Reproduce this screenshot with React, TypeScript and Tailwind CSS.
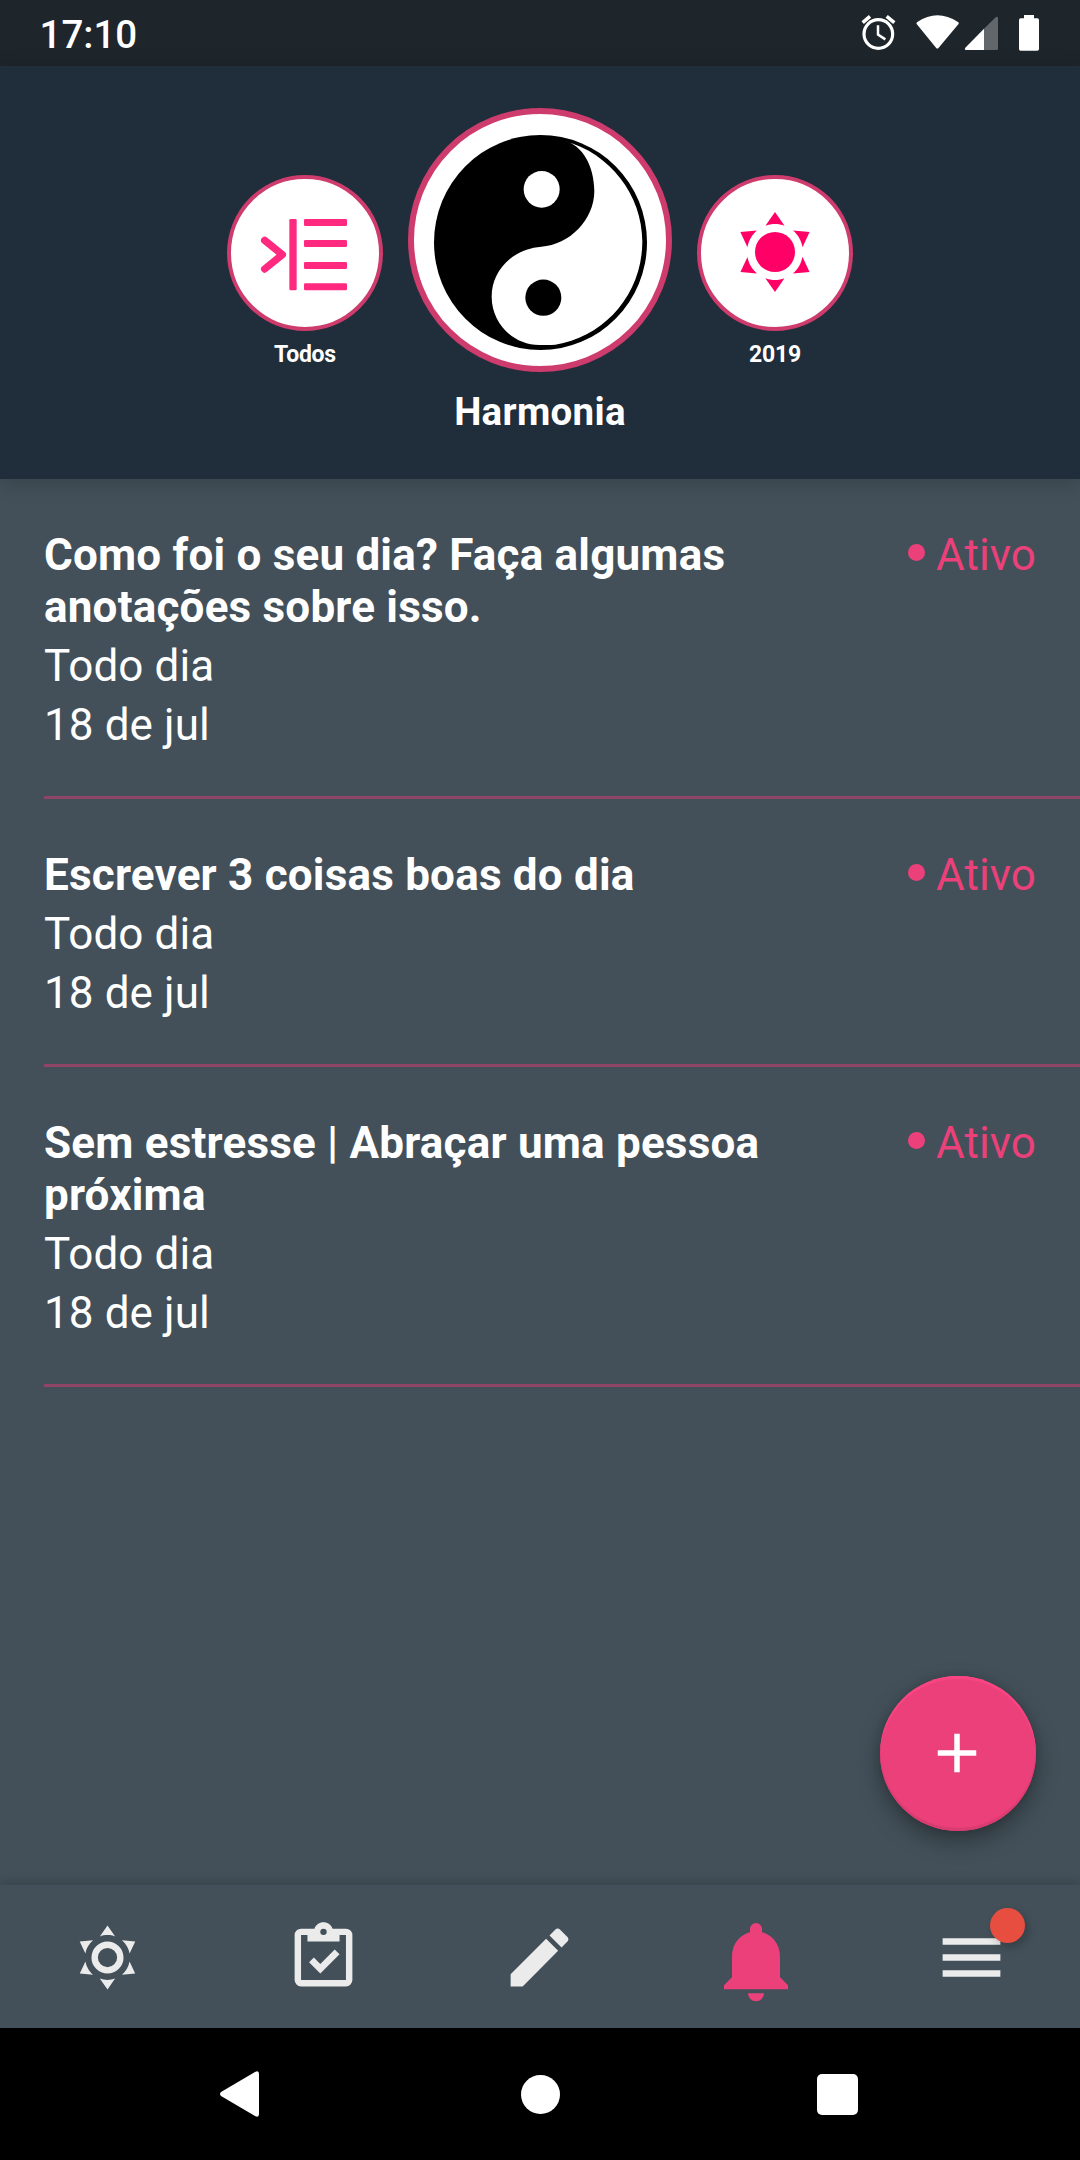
import React from 'react'

type Reminder = {
    id: number;
    title: string;
    repeat: string;
    date: string;
};

interface IconProps {
    d: string;
    className?: string;
}

const reminders: Reminder[] = [
    { id: 1, title: 'Como foi o seu dia? Faça algumas anotações sobre isso.', repeat: 'Todo dia', date: '18 de jul' },
    { id: 2, title: 'Escrever 3 coisas boas do dia', repeat: 'Todo dia', date: '18 de jul' },
    { id: 3, title: 'Sem estresse | Abraçar uma pessoa próxima', repeat: 'Todo dia', date: '18 de jul' },
];

const sunRays = 'M12,2L14.39,5.42C13.65,5.15 12.84,5 12,5C11.16,5 10.35,5.15 9.61,5.42L12,2M3.34,7L7.5,6.65C6.9,7.16 6.36,7.78 5.94,8.5C5.5,9.24 5.25,10 5.11,10.79L3.34,7M3.36,17L5.12,13.23C5.26,14 5.53,14.78 5.95,15.5C6.37,16.24 6.91,16.86 7.5,17.37L3.36,17M20.65,7L18.88,10.79C18.74,10 18.47,9.23 18.05,8.5C17.63,7.78 17.1,7.15 16.5,6.64L20.65,7M20.64,17L16.5,17.36C17.09,16.85 17.62,16.22 18.04,15.5C18.46,14.77 18.73,14 18.87,13.21L20.64,17M12,22L9.59,18.56C10.33,18.83 11.14,19 12,19C12.82,19 13.63,18.83 14.37,18.56L12,22Z';
const sunRing = 'M12,7A5,5 0 0,1 17,12A5,5 0 0,1 12,17A5,5 0 0,1 7,12A5,5 0 0,1 12,7M12,9A3,3 0 0,0 9,12A3,3 0 0,0 12,15A3,3 0 0,0 15,12A3,3 0 0,0 12,9';
const clipboard = 'M19,3H14.82C14.4,1.84 13.3,1 12,1C10.7,1 9.6,1.84 9.18,3H5A2,2 0 0,0 3,5V19A2,2 0 0,0 5,21H19A2,2 0 0,0 21,19V5A2,2 0 0,0 19,3M12,3A1,1 0 0,1 13,4A1,1 0 0,1 12,5A1,1 0 0,1 11,4A1,1 0 0,1 12,3M7,7H17V5H19V19H5V5H7V7M7.5,13.5L9,12L11,14L15.5,9.5L17,11L11,17L7.5,13.5Z';
const pencil = 'M20.71,7.04C21.1,6.65 21.1,6 20.71,5.63L18.37,3.29C18,2.9 17.35,2.9 16.96,3.29L15.12,5.12L18.87,8.87M3,17.25V21H6.75L17.81,9.93L14.06,6.18L3,17.25Z';
const menu = 'M3,6H21V8H3V6M3,11H21V13H3V11M3,16H21V18H3V16Z';
const plus = 'M19,13H13V19H11V13H5V11H11V5H13V11H19V13Z';

const Icon: React.FC<IconProps> = ({ d, className }) => (
    <svg viewBox="0 0 24 24" fill="currentColor" className={className}>
        <path d={d} />
    </svg>
);

const StatusBar = () => (
    <div className="flex h-[66px] items-start justify-between bg-[#1e252b] pl-[39.5px] pr-10">
        <span className="mt-[11px] text-[38.5px] font-medium leading-[48px]">17:10</span>
        <div className="mt-[13px] flex">
            <svg viewBox="93 39 105 117" className="h-[39px] w-[35px]" fill="none" stroke="#fff">
                <circle cx="145" cy="102" r="43" strokeWidth="9.5" />
                <path d="M144 76V104L166 118" strokeWidth="7.5" />
                <path d="M98 68L120 49M170 49L193 68" strokeWidth="10.5" />
            </svg>
            <svg viewBox="258 39 132 117" className="ml-5 h-[39px] w-11" fill="#fff">
                <path d="M260 72Q258 69 262 66Q322 26 384 66Q388 69 385 73L326 143Q322 148 318 143Z" />
            </svg>
            <svg viewBox="402 39 105 117" className="ml-1 h-[39px] w-[35px]">
                <path d="M462 86L497 52Q504 48 504 55V146Q504 150 500 150H462Z" fill="#62676b" />
                <path d="M462 86V150H408Q402 149 406 143Z" fill="#fff" />
            </svg>
            <svg viewBox="564 39 66 117" className="ml-[19px] h-[39px] w-[22px]" fill="#fff">
                <path d="M582 45H612V55H622Q627 55 627 60V147Q627 152 622 152H572Q567 152 567 147V60Q567 55 572 55H582Z" />
            </svg>
        </div>
    </div>
);

const Header = () => (
    <header className="relative z-10 flex h-[413px] justify-center gap-[25px] bg-[#202d3a] pt-[42px] shadow-[0_4px_20px_rgba(0,0,0,0.18)]">
        <div className="mt-[67px] flex w-[156px] flex-col items-center">
            <div className="size-[156px] rounded-full border-4 border-[#cd3c6d] bg-white">
                <svg viewBox="63 57 444 444" className="size-[148px]" fill="#ff2a7f">
                    <path d="M164 241L217 284L164 327" fill="none" stroke="#ff2a7f" strokeWidth="22" strokeLinecap="round" strokeLinejoin="round" />
                    <rect x="238" y="177" width="22" height="214" rx="4" />
                    <rect x="282" y="177" width="129" height="21" rx="4" />
                    <rect x="282" y="240" width="129" height="21" rx="4" />
                    <rect x="282" y="306" width="129" height="21" rx="4" />
                    <rect x="282" y="370" width="129" height="21" rx="4" />
                </svg>
            </div>
            <span className="mt-[10px] text-[23px] font-bold leading-[28px] tracking-[-0.25px]">Todos</span>
        </div>
        <div className="flex w-[264px] flex-col items-center">
            <div className="size-[264px] rounded-full border-[6px] border-[#cd3c6d] bg-white">
                <svg viewBox="42 42 756 756" className="size-[252px]">
                    <ellipse cx="421.5" cy="427.5" rx="319.5" ry="322.5" />
                    <path
                        d="M494 123C548 136 582 198 583 272C583 360 508 434 424 440C340 446 275 510 275 590C275 672 342 735 418 735C430 735 450 736 466 734C610 712 727 585 727 424C727 285 630 160 494 123Z"
                        fill="#fff"
                    />
                    <ellipse cx="425" cy="268" rx="54" ry="55" fill="#fff" />
                    <ellipse cx="430" cy="593" rx="54" ry="54.5" />
                </svg>
            </div>
            <span className="mt-[17px] text-[38.5px] font-bold leading-[46px] tracking-[0.3px]">Harmonia</span>
        </div>
        <div className="mt-[67px] flex w-[156px] flex-col items-center">
            <div className="flex size-[156px] items-center justify-center rounded-full border-4 border-[#cd3c6d] bg-white">
                <svg viewBox="0 0 24 24" className="mb-[2px] size-24" fill="#ff0066">
                    <circle cx="12" cy="12" r="5" />
                    <path d={sunRays} />
                </svg>
            </div>
            <span className="mt-[10px] text-[23px] font-bold leading-[28px] tracking-[-0.25px]">2019</span>
        </div>
    </header>
);

const ReminderRow: React.FC<{ reminder: Reminder }> = ({ reminder }) => (
    <li className="ml-11 border-b-3 border-[#8e4566] pb-[45px] pt-[50px]">
        <div className="flex items-start justify-between pr-11 text-[44px] leading-[52px]">
            <div>
                <h2 className="w-[760px] font-bold tracking-[0.2px]">{reminder.title}</h2>
                <p className="mt-[7px] tracking-[0.1px]">{reminder.repeat}</p>
                <p className="mt-[7px] tracking-[0.1px]">{reminder.date}</p>
            </div>
            <div className="flex text-[#ec407a]">
                <span className="mr-[11px] mt-[15px] size-[17px] rounded-full bg-[#ec407a]" />
                <span className="tracking-[0.1px]">Ativo</span>
            </div>
        </div>
    </li>
);

const TabBar = () => (
    <nav className="relative grid h-[143px] grid-cols-5 items-center justify-items-center bg-[#435059] pt-px text-[#ebebeb] shadow-[0_-1px_12px_rgba(0,0,0,0.22)]">
        <Icon d={sunRing + sunRays} className="mr-px size-[77px]" />
        <Icon d={clipboard} className="mr-px size-[77px]" />
        <Icon d={pencil} className="mr-px size-[77px]" />
        <svg viewBox="732 158 192 237" className="mt-[10px] h-[79px] w-16" fill="#ec407a">
            <path d="M810 186V176A18 18 0 0 1 846 176V186C877 194 900 222 900 258V321L924 345V357H732V345L756 321V258C756 222 779 194 810 186Z" />
            <path d="M804 369H852A24 24 0 0 1 804 369Z" />
        </svg>
        <div className="relative mr-px">
            <Icon d={menu} className="size-[77px]" />
            <span className="absolute left-[57px] top-[-11px] size-[35px] rounded-full bg-[#e74e40] shadow-[3px_4px_8px_rgba(0,0,0,0.22)]" />
        </div>
    </nav>
);

const SystemNav = () => (
    <div className="flex h-[132px] items-center bg-black pl-[220px]">
        <svg viewBox="0 0 39 46" className="h-[46px] w-[39px]" fill="#fff">
            <path d="M1 21L35 1Q39 -1 39 3V43Q39 47 35 45L1 25Q-1 23 1 21Z" />
        </svg>
        <span className="ml-[262px] size-[39px] rounded-full bg-white" />
        <span className="ml-[257px] h-[41px] w-[41px] rounded-[5px] bg-white" />
    </div>
);

const App = () => {
    return (
        <div className="flex h-[2160px] w-[1080px] flex-col overflow-hidden bg-[#435059] font-[Roboto,sans-serif] text-white">
            <StatusBar />
            <Header />
            <main className="relative flex-1">
                <ul>
                    {reminders.map((r) => (
                        <ReminderRow key={r.id} reminder={r} />
                    ))}
                </ul>
                <button className="absolute bottom-[54px] right-[44.5px] flex size-[155.5px] items-center justify-center rounded-full bg-[#ec407a] shadow-[0_10px_22px_rgba(0,0,0,0.34),0_0_8px_rgba(0,0,0,0.1),inset_0_3px_1px_#fb4583,inset_0_-3px_1px_#d73d70]">
                    <Icon d={plus} className="mr-px size-[66px]" />
                </button>
            </main>
            <TabBar />
            <SystemNav />
        </div>
    )
}

export default App
